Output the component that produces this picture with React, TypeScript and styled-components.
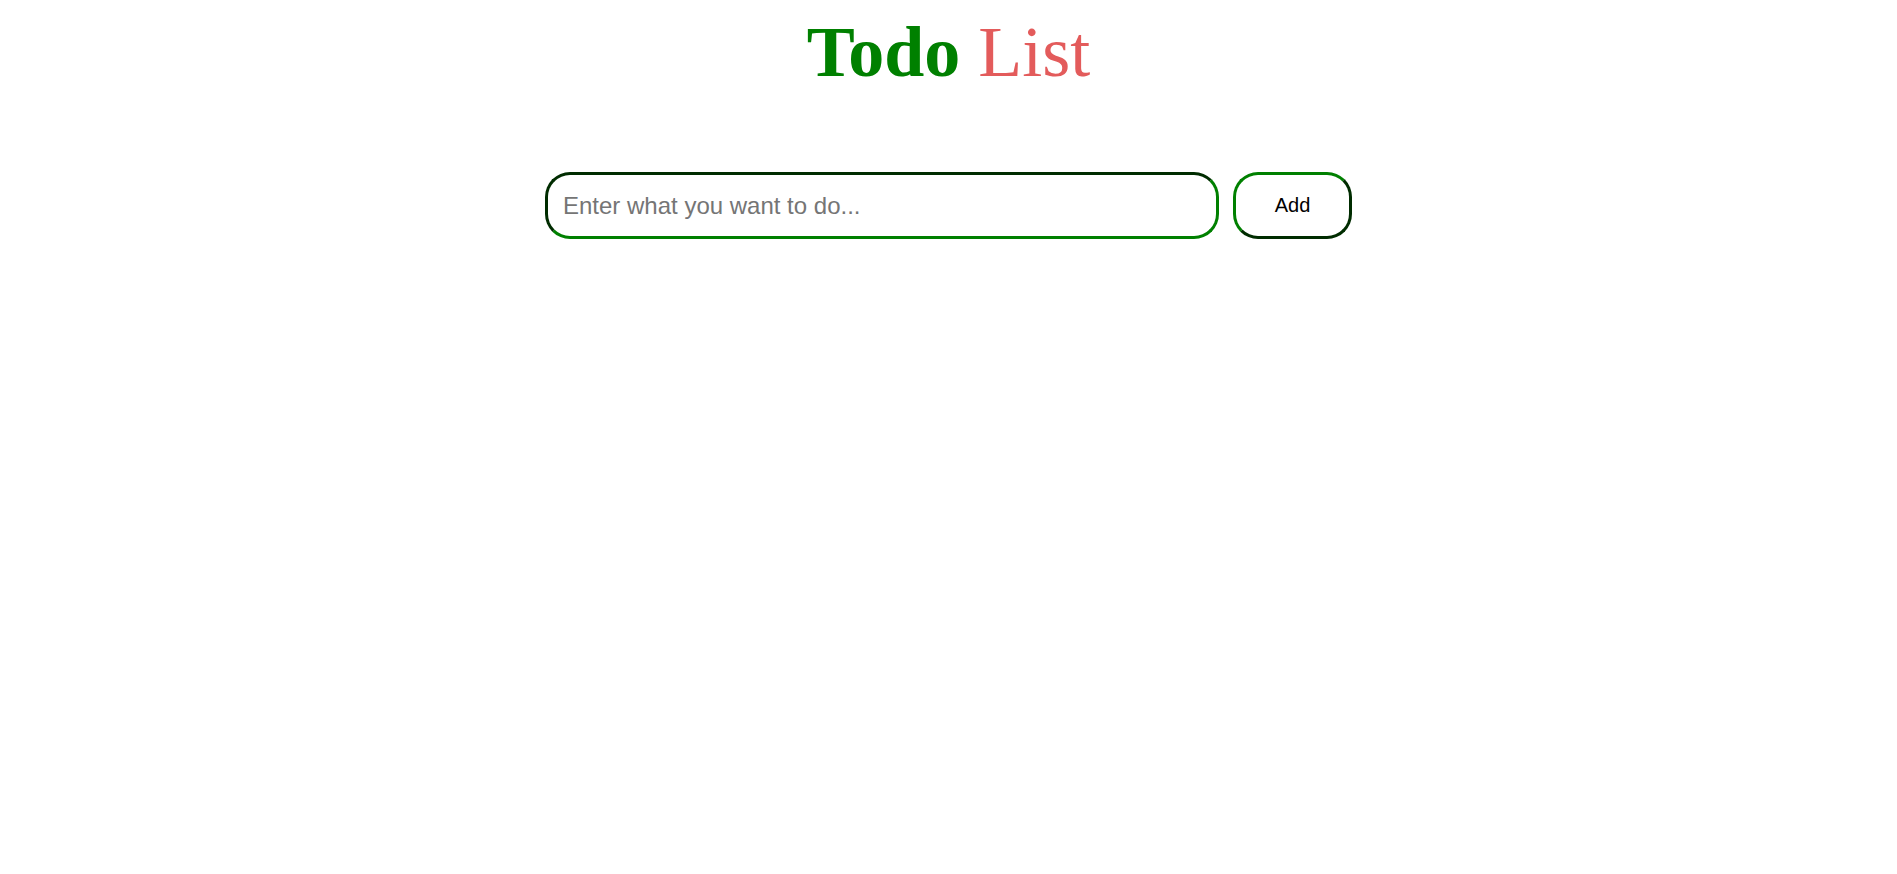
import React, { useState } from "react";
import styled, { createGlobalStyle } from "styled-components";

const Global = createGlobalStyle`
  html, body { margin: 0; padding: 0; background: #ffffff; }
  body { font-family: "Liberation Serif", "Times New Roman", serif; }
`;

const Page = styled.main`
  display: flex;
  flex-direction: column;
  align-items: center;
  padding-top: 12px;
`;

const Title = styled.h1`
  margin: 0;
  font-family: "Liberation Serif", "Times New Roman", serif;
  font-size: 72px;
  line-height: 80px;
  font-weight: 400;
  text-align: center;
`;

const Word = styled.span<{ $bold?: boolean; $color: string }>`
  color: ${(p) => p.$color};
  font-weight: ${(p) => (p.$bold ? 700 : 400)};
`;

const Form = styled.form`
  display: flex;
  justify-content: center;
  gap: 14px;
  margin-top: 80px;
`;

const Input = styled.input`
  box-sizing: border-box;
  width: 674px;
  height: 67px;
  padding: 0 15px;
  border: 3px inset green;
  border-radius: 25px;
  font-family: "Liberation Sans", Arial, sans-serif;
  font-size: 24px;
  color: #222;
  outline: none;
  background: #fff;
  &::placeholder { color: #757575; }
`;

const Button = styled.button`
  box-sizing: border-box;
  width: 119px;
  height: 67px;
  border: 3px outset green;
  border-radius: 25px;
  background: #fff;
  color: #000;
  font-family: "Liberation Sans", Arial, sans-serif;
  font-size: 20px;
  cursor: pointer;
`;

export default function App() {
  const [value, setValue] = useState("");
  return (
    <>
      <Global />
      <Page>
        <Title>
          <Word $bold $color="#008000">Todo</Word>{" "}
          <Word $color="#e35b5b">List</Word>
        </Title>
        <Form onSubmit={(e) => { e.preventDefault(); setValue(""); }}>
          <Input
            value={value}
            onChange={(e) => setValue(e.target.value)}
            placeholder="Enter what you want to do..."
          />
          <Button type="submit">Add</Button>
        </Form>
      </Page>
    </>
  );
}
